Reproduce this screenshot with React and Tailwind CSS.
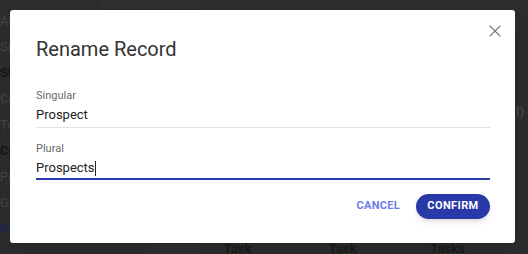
import React from "react";
import { X } from "lucide-react";

const sideItems = [
  { t: "API", c: "text-[#444]" },
  { t: "Sing", c: "text-[#444]" },
  { t: "Stag", c: "text-[#161616] font-bold" },
  { t: "Con", c: "text-[#444]" },
  { t: "Text", c: "text-[#444]" },
  { t: "Conv", c: "text-[#161616] font-bold" },
  { t: "Pipe", c: "text-[#444]" },
  { t: "Goal", c: "text-[#444]" },
  { t: "Ren", c: "text-[#1d2455]" },
];

const Background = () => {
  return (
    <div className="flex w-full h-full">
      <div className="flex flex-col w-[100px] pt-[13px] gap-[11px] text-[13px] leading-[15px]">
        {sideItems.map((s) => (
          <p key={s.t} className={s.c}>
            {s.t}
          </p>
        ))}
      </div>
      <div className="flex-1 flex flex-col">
        <div className="h-[9px] flex">
          <div className="w-[100px] bg-[#303030]"></div>
          <div className="flex-1"></div>
        </div>
        <div className="flex-1 flex flex-col items-end">
          <div className="w-[20px] mt-[50px] border-t border-[#262626]"></div>
          <div className="w-[20px] mt-[23px] border-t border-[#262626]"></div>
          <p className="text-[13px] mt-[18px] text-[#444] font-bold pr-[4px]">l)</p>
          <div className="w-[20px] mt-[12px] border-t border-[#262626]"></div>
          <div className="w-[20px] mt-[54px] border-t border-[#262626]"></div>
          <div className="w-[20px] mt-[44px] border-t border-[#262626]"></div>
        </div>
      </div>
      <div className="absolute left-[150px] bottom-0 w-[50px] h-[10px] bg-[#2f2f2f]"></div>
      <div className="absolute left-[185px] bottom-0 flex text-[13px] font-bold text-[#1a1a1a] h-[10px]">
        <p className="w-[105px] text-center -mt-[5px]">Task</p>
        <p className="w-[105px] text-center -mt-[5px]">Task</p>
        <p className="w-[105px] text-center -mt-[5px]">Tasks</p>
      </div>
    </div>
  );
};

const Field = (props) => {
  return (
    <div className="flex flex-col">
      <p className="text-[11px] leading-[16px] text-[#6b6b6b]">{props.label}</p>
      <div
        className={
          props.focused
            ? "flex items-center h-[18px] mt-[2px] text-[13px] text-[#222] border-b-2 border-[#2a39a8] pb-[1px] box-content"
            : "flex items-center h-[18px] mt-[2px] text-[13px] text-[#222] border-b border-[#e2e2e2] pb-[3px] box-content"
        }
      >
        <span>{props.value}</span>
        {props.focused && <span className="w-px h-[15px] bg-[#222]"></span>}
      </div>
    </div>
  );
};

const App = () => {
  return (
    <div
      className="relative w-[528px] h-[254px] overflow-hidden bg-[#2c2c2c]"
      style={{ fontFamily: "Roboto, 'Liberation Sans', sans-serif" }}
    >
      <Background />
      <div className="absolute left-[10px] top-[10px] w-[505px] h-[233px] bg-white rounded-[3px] shadow-lg flex flex-col pl-[26px] pr-[25px]">
        <button className="absolute right-[10px] top-[11px] text-[#777]">
          <X size={20} strokeWidth={1.3} />
        </button>
        <h1 className="mt-[27px] text-[20px] leading-[24px] text-[#333]">Rename Record</h1>
        <div className="mt-[27px]">
          <Field label="Singular" value="Prospect" />
        </div>
        <div className="mt-[13px]">
          <Field label="Plural" value="Prospects" focused />
        </div>
        <div className="flex justify-end items-center gap-[10px] mt-[14px]">
          <button className="px-[6px] h-[25px] text-[11px] font-bold tracking-[0.3px] text-[#6a7ee6]">
            CANCEL
          </button>
          <button className="w-[74px] h-[25px] rounded-full bg-[#2a39a8] text-white text-[11px] font-bold tracking-[0.4px] shadow-md">
            CONFIRM
          </button>
        </div>
      </div>
    </div>
  );
};

export default App;
